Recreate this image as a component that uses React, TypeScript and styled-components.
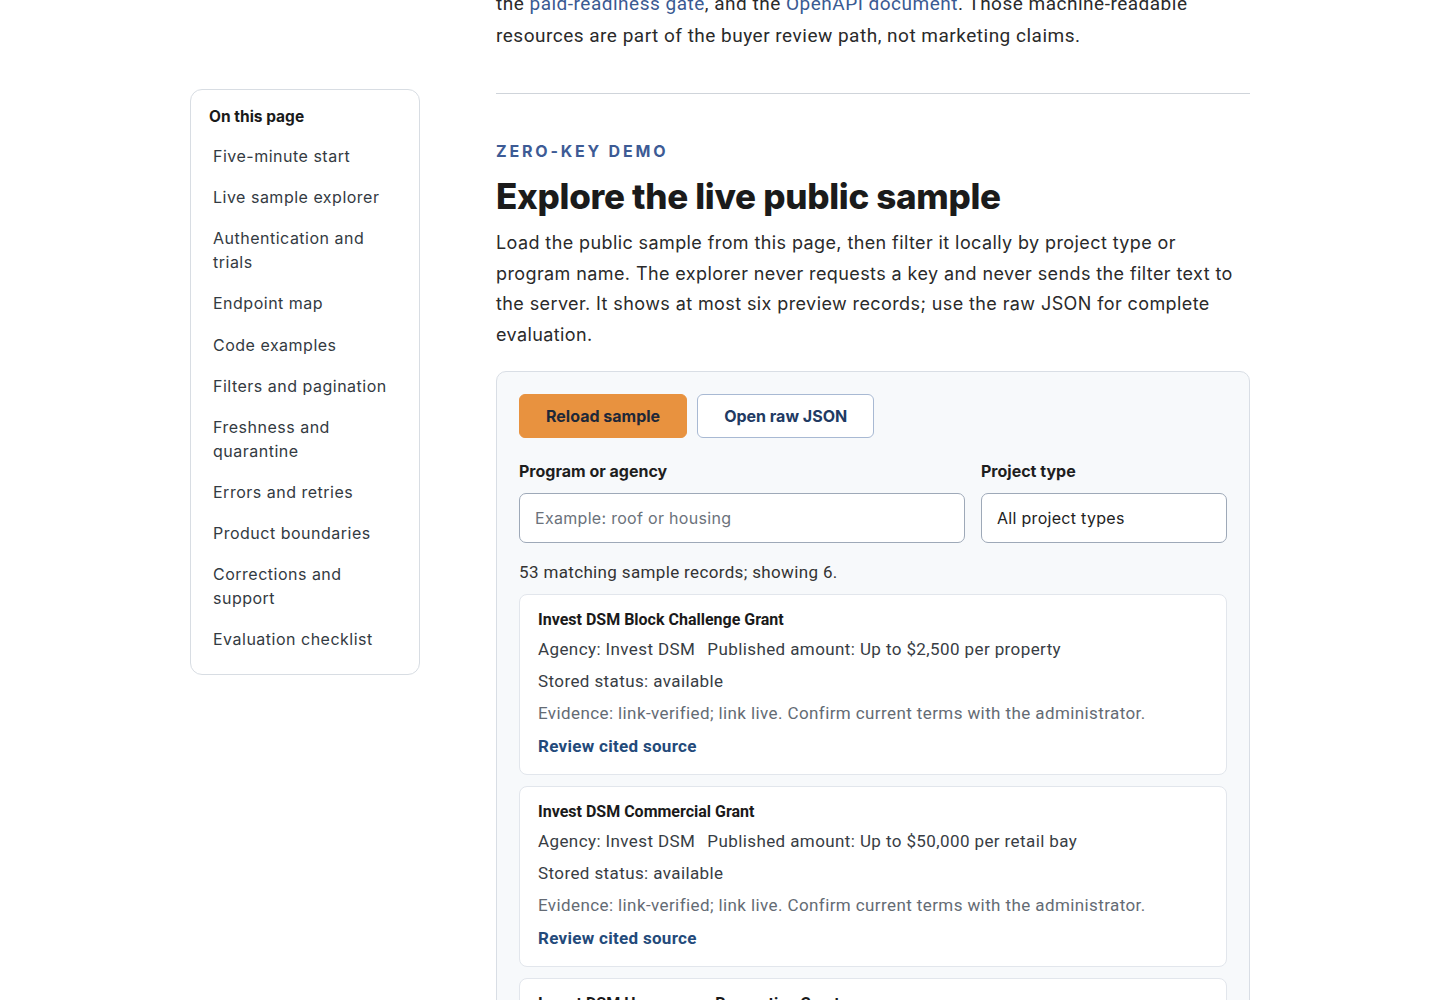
import styled, { createGlobalStyle } from "styled-components";

const GlobalStyle = createGlobalStyle`
  * { box-sizing: border-box; }
  body {
    margin: 0;
    background: #ffffff;
    color: #222222;
    font-family: Inter, "Open Sans", sans-serif;
    overflow: hidden;
  }
`;

const Page = styled.div`
  width: 1060px;
  margin: -12px auto 0;
  display: grid;
  grid-template-columns: 230px 1fr;
  gap: 76px;
  align-items: start;
`;

const Sidebar = styled.nav`
  margin-top: 101px;
  border: 1px solid #d8dde3;
  border-radius: 12px;
  background: #ffffff;
  padding: 17px 18px 13px;
`;

const SideTitle = styled.div`
  font-weight: 700;
  font-size: 15.5px;
  color: #1a1a1a;
  margin-bottom: 10px;
`;

const SideLink = styled.a`
  display: block;
  padding: 8.9px 4px;
  font-size: 16px;
  line-height: 23.5px;
  color: #333a42;
  letter-spacing: 0.5px;
  text-decoration: none;
`;

const Main = styled.main`
  min-width: 0;
`;

const Lead = styled.p`
  margin: 0;
  font-family: Roboto, "Liberation Sans", sans-serif;
  font-size: 19px;
  line-height: 32px;
  letter-spacing: 0.5px;
  color: #2a2a2a;
`;

const InlineLink = styled.a`
  color: #3a5a92;
  text-decoration: none;
`;

const Rule = styled.hr`
  border: 0;
  border-top: 1px solid #cfd4da;
  margin: 41px 0 46px;
`;

const Eyebrow = styled.div`
  font-size: 16px;
  font-weight: 700;
  letter-spacing: 2.8px;
  color: #3d5b95;
  text-transform: uppercase;
  line-height: 22px;
`;

const Heading = styled.h2`
  margin: 13px 0 11px;
  font-size: 35px;
  line-height: 42px;
  font-weight: 800;
  letter-spacing: -0.3px;
  color: #1b1b1b;
`;

const Body = styled.p`
  margin: 0 0 21px;
  font-size: 18px;
  line-height: 30.5px;
  color: #2a2a2a;
  letter-spacing: 0.4px;
`;

const Panel = styled.section`
  background: #f7f9fb;
  border: 1px solid #d9dee5;
  border-radius: 10px;
  padding: 22px 22px 30px;
`;

const Actions = styled.div`
  display: flex;
  gap: 10px;
  margin-bottom: 23px;
`;

const Button = styled.button<{ $primary?: boolean }>`
  height: 44px;
  padding: 0 26px;
  border-radius: 6px;
  font-family: inherit;
  font-size: 16px;
  font-weight: 700;
  cursor: pointer;
  border: 1.5px solid ${(p) => (p.$primary ? "#e8923f" : "#a8b9d3")};
  background: ${(p) => (p.$primary ? "#e8923f" : "#ffffff")};
  color: ${(p) => (p.$primary ? "#1e2838" : "#213a63")};
`;

const Filters = styled.div`
  display: grid;
  grid-template-columns: 1fr 246px;
  gap: 16px;
  margin-bottom: 18px;
`;

const Field = styled.label`
  display: flex;
  flex-direction: column;
  gap: 12px;
`;

const FieldLabel = styled.span`
  font-size: 16px;
  font-weight: 700;
  color: #1e1e1e;
  line-height: 20px;
`;

const Input = styled.input`
  height: 50px;
  border: 1.5px solid #9ea9b8;
  border-radius: 7px;
  background: #ffffff;
  padding: 0 15px;
  font-family: inherit;
  font-size: 16px;
  letter-spacing: 0.3px;
  color: #222;
  outline: none;
  &::placeholder {
    color: #6b727b;
  }
`;

const Select = styled.div`
  height: 50px;
  border: 1.5px solid #9ea9b8;
  border-radius: 7px;
  background: #ffffff;
  padding: 0 15px;
  display: flex;
  align-items: center;
  font-size: 16px;
  letter-spacing: 0.3px;
  color: #222;
`;

const Count = styled.div`
  font-family: Roboto, "Liberation Sans", sans-serif;
  font-size: 17px;
  line-height: 22px;
  letter-spacing: 0.35px;
  color: #333;
  margin-bottom: 11px;
`;

const Cards = styled.div`
  display: flex;
  flex-direction: column;
  gap: 11px;
`;

const Card = styled.article`
  background: #ffffff;
  border: 1px solid #e2e6ec;
  border-radius: 8px;
  padding: 14px 18px 12px;
  font-family: Roboto, "Liberation Sans", sans-serif;
`;

const CardTitle = styled.h3`
  margin: 0 0 2px;
  font-size: 16px;
  line-height: 22px;
  font-weight: 700;
  color: #1a1a1a;
`;

const CardLine = styled.div<{ $muted?: boolean }>`
  font-size: 17px;
  line-height: 32px;
  letter-spacing: 0.4px;
  color: ${(p) => (p.$muted ? "#646b74" : "#383d44")};
`;

const Meta = styled.span`
  margin-right: 12px;
`;

const CardLink = styled.a`
  display: inline-block;
  margin-top: 1px;
  font-size: 17px;
  line-height: 32px;
  letter-spacing: 0.3px;
  font-weight: 700;
  color: #234a7a;
  text-decoration: none;
`;

const toc = [
  "Five-minute start",
  "Live sample explorer",
  "Authentication and trials",
  "Endpoint map",
  "Code examples",
  "Filters and pagination",
  "Freshness and quarantine",
  "Errors and retries",
  "Product boundaries",
  "Corrections and support",
  "Evaluation checklist",
];

const records = [
  { title: "Invest DSM Block Challenge Grant", agency: "Invest DSM", amount: "Up to $2,500 per property" },
  { title: "Invest DSM Commercial Grant", agency: "Invest DSM", amount: "Up to $50,000 per retail bay" },
  { title: "Invest DSM Homeowner Renovation Grant", agency: "Invest DSM", amount: "Up to $20,000 per property" },
];

export default function App() {
  return (
    <>
      <GlobalStyle />
      <Page>
        <Sidebar>
          <SideTitle>On this page</SideTitle>
          {toc.map((item) => (
            <SideLink key={item} href="#">
              {item}
            </SideLink>
          ))}
        </Sidebar>
        <Main>
          <Lead>
            the <InlineLink href="#">paid-readiness gate</InlineLink>, and the{" "}
            <InlineLink href="#">OpenAPI document</InlineLink>. Those machine-readable resources are part of
            the buyer review path, not marketing claims.
          </Lead>
          <Rule />
          <Eyebrow>Zero-key demo</Eyebrow>
          <Heading>Explore the live public sample</Heading>
          <Body>
            Load the public sample from this page, then filter it locally by project type or program name. The
            explorer never requests a key and never sends the filter text to the server. It shows at most six
            preview records; use the raw JSON for complete evaluation.
          </Body>
          <Panel>
            <Actions>
              <Button $primary>Reload sample</Button>
              <Button>Open raw JSON</Button>
            </Actions>
            <Filters>
              <Field>
                <FieldLabel>Program or agency</FieldLabel>
                <Input placeholder="Example: roof or housing" />
              </Field>
              <Field>
                <FieldLabel>Project type</FieldLabel>
                <Select>All project types</Select>
              </Field>
            </Filters>
            <Count>53 matching sample records; showing 6.</Count>
            <Cards>
              {records.map((r) => (
                <Card key={r.title}>
                  <CardTitle>{r.title}</CardTitle>
                  <CardLine>
                    <Meta>Agency: {r.agency}</Meta>
                    <Meta>Published amount: {r.amount}</Meta>
                  </CardLine>
                  <CardLine>Stored status: available</CardLine>
                  <CardLine $muted>
                    Evidence: link-verified; link live. Confirm current terms with the administrator.
                  </CardLine>
                  <CardLink href="#">Review cited source</CardLink>
                </Card>
              ))}
            </Cards>
          </Panel>
        </Main>
      </Page>
    </>
  );
}
